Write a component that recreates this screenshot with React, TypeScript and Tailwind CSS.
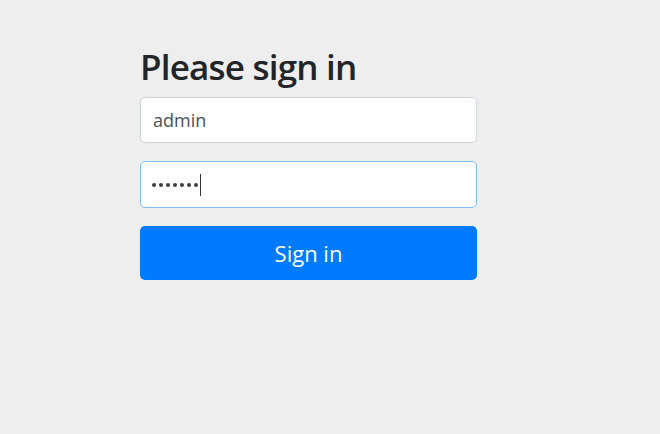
export default function App() {
  const font = { fontFamily: '"Open Sans", "Noto Sans", sans-serif' };
  return (
    <div className="min-h-screen w-full bg-[#eeeeee]" style={font}>
      <div className="pl-[140px] pt-[44px]">
        <div className="w-[337px] flex flex-col">
          <h2 className="text-[35px] leading-[46px] font-semibold text-[#212529] tracking-[-0.8px] mb-[7px]">Please sign in</h2>
          <div className="h-[46px] rounded-[5px] border border-[#ced4da] bg-white flex items-center px-[12px] text-[18px] text-[#495057]">
            admin
          </div>
          <div className="mt-[18px] h-[47px] rounded-[5px] border border-[#80bdff] bg-white flex items-center px-[11px] text-[18px] text-[#495057]">
            <span className="flex items-center gap-[3px]">
              {Array.from({ length: 7 }).map((_, i) => (
                <span key={i} className="w-[4px] h-[4px] rounded-full bg-[#3a3f44]" />
              ))}
            </span>
            <span className="ml-[2px] w-px h-[22px] bg-[#333]" />
          </div>
          <button className="mt-[18px] h-[54px] rounded-[5px] bg-[#007bff] text-white text-[22px] flex items-center justify-center">
            Sign in
          </button>
        </div>
      </div>
    </div>
  );
}
